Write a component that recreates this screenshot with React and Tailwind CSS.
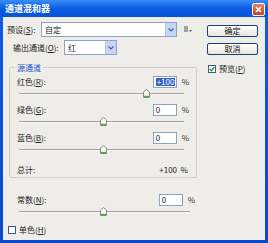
import React from "react";

const font = { fontFamily: '"Noto Sans CJK SC", "Liberation Sans", sans-serif' };

function Thumb() {
  return (
    <svg width="7" height="9" viewBox="0 0 7 9" className="block">
      <path d="M0.5 3 L3.5 0.5 L6.5 3 L6.5 8.5 L0.5 8.5 Z" fill="#fbfbf8" stroke="#8a8a80" strokeWidth="1" />
      <path d="M1 7.5 H6" stroke="#3cb23c" strokeWidth="1.4" />
    </svg>
  );
}

function Slider({ pos }) {
  return (
    <div className="relative h-[9px] flex items-center">
      <div className="w-full h-[2px] border-t border-[#a5a39a] bg-[#f7f7f4]" />
      <div className="absolute top-0" style={{ left: pos }}>
        <Thumb />
      </div>
    </div>
  );
}

function NumInput({ value, selected }) {
  return (
    <div className="w-[24px] h-[12px] bg-white border border-[#8aa3c4] flex items-center pl-[2px] text-[8px] leading-none text-[#222]">
      {selected ? (
        <span className="bg-[#3162c4] text-white px-[1px]">{value}</span>
      ) : (
        <span>{value}</span>
      )}
    </div>
  );
}

function Channel({ label, mnemonic, suffix, value, selected, pos }) {
  return (
    <div className="flex flex-col">
      <div className="flex items-center justify-between h-[12px]">
        <span className="text-[8px] leading-none text-[#222]">
          {label}(<span className="underline">{mnemonic}</span>){suffix}
        </span>
        <div className="flex items-center gap-[5px] mr-[1px]">
          <NumInput value={value} selected={selected} />
          <span className="text-[8px] leading-none text-[#333]">%</span>
        </div>
      </div>
      <div className="mt-[1px] ml-[2px] mr-[6px]">
        <Slider pos={pos} />
      </div>
    </div>
  );
}

function XPButton({ children }) {
  return (
    <div className="w-[51px] h-[12px] rounded-[2px] border border-[#1c3f7a] bg-gradient-to-b from-white to-[#e6e5de] flex items-center justify-center text-[8px] leading-none text-[#111]">
      {children}
    </div>
  );
}

function Arrow() {
  return (
    <div className="w-[11px] h-full bg-[#c4d5f7] border-l border-[#b0c6ee] flex items-center justify-center">
      <svg width="6" height="4" viewBox="0 0 6 4">
        <path d="M0.5 0.5 L3 3 L5.5 0.5" fill="none" stroke="#4d6185" strokeWidth="1.2" />
      </svg>
    </div>
  );
}

export default function App() {
  return (
    <div className="w-[268px] h-[243px] bg-gradient-to-b from-[#0b5ee8] to-[#0a47cc] flex flex-col overflow-hidden" style={font}>
      {/* Title bar */}
      <div className="h-[17px] flex items-center justify-between pl-[5px] pr-[3px] bg-gradient-to-b from-[#3a8cf5] via-[#0a5be4] to-[#0753d6]">
        <span className="text-[9px] font-bold text-white leading-none">通道混和器</span>
        <div className="w-[13px] h-[13px] rounded-[2px] border border-white bg-gradient-to-b from-[#e9815f] to-[#c4411e] flex items-center justify-center mt-[1px]">
          <svg width="7" height="7" viewBox="0 0 7 7">
            <path d="M1 1 L6 6 M6 1 L1 6" stroke="white" strokeWidth="1.6" />
          </svg>
        </div>
      </div>
      {/* Body */}
      <div className="flex-1 mx-[3px] mb-[3px] bg-[#eeede9] flex text-[#222]">
        {/* Left column */}
        <div className="w-[194px] flex flex-col">
          <div className="flex items-center mt-[5px] h-[15px]">
            <span className="ml-[4px] w-[34px] text-[8px] leading-none">
              预设(<span className="underline">S</span>):
            </span>
            <div className="w-[136px] h-[15px] bg-white border border-[#8aa3c4] flex items-center">
              <span className="flex-1 pl-[3px] text-[8px] leading-none">自定</span>
              <Arrow />
            </div>
            <svg width="8" height="7" viewBox="0 0 8 7" className="ml-[7px]">
              <path d="M0 1 H4 M0 3 H4 M0 5 H4" stroke="#555" strokeWidth="1" />
              <path d="M5 4 L8 4 L6.5 6 Z" fill="#555" />
            </svg>
          </div>
          <div className="flex items-center mt-[3px] h-[15px]">
            <span className="ml-[10px] w-[51px] text-[8px] leading-none">
              输出通道(<span className="underline">O</span>):
            </span>
            <div className="w-[53px] h-[15px] bg-white border border-[#8aa3c4] flex items-center">
              <span className="flex-1 pl-[3px] text-[8px] leading-none">红</span>
              <Arrow />
            </div>
          </div>
          {/* Group box */}
          <div className="relative ml-[6px] mt-[12px] h-[111px] border border-[#cfcdc4] rounded-[2px] pl-[7px] pr-[6px] pt-[8px] flex flex-col">
            <span className="absolute -top-[6px] left-[5px] px-[2px] bg-[#eeede9] text-[8px] leading-[11px] text-[#1c4fc8]">源通道</span>
            <Channel label="红色" mnemonic="R" suffix=":" value="+100" selected pos="124px" />
            <div className="mt-[6px]">
              <Channel label="绿色" mnemonic="G" suffix=":" value="0" pos="81px" />
            </div>
            <div className="mt-[6px]">
              <Channel label="蓝色" mnemonic="B" suffix=":" value="0" pos="81px" />
            </div>
            <div className="flex items-center justify-between mt-[11px] h-[10px] mr-[2px]">
              <span className="text-[8px] leading-none">总计:</span>
              <span className="text-[8px] leading-none">+100&nbsp;&nbsp;%</span>
            </div>
          </div>
          {/* Constant */}
          <div className="ml-[14px] mt-[16px] mr-[1px]">
            <Channel label="常数" mnemonic="N" suffix=":" value="0" pos="81px" />
          </div>
          <div className="flex items-center mt-[10px] ml-[5px]">
            <div className="w-[8px] h-[8px] border border-[#3a5d8f] bg-white" />
            <span className="ml-[3px] text-[8px] leading-none">
              单色(<span className="underline">H</span>)
            </span>
          </div>
        </div>
        {/* Right column */}
        <div className="flex flex-col ml-[10px] mt-[8px]">
          <XPButton>确定</XPButton>
          <div className="mt-[6px]">
            <XPButton>取消</XPButton>
          </div>
          <div className="flex items-center mt-[10px] ml-[1px]">
            <div className="w-[8px] h-[8px] border border-[#3a5d8f] bg-white flex items-center justify-center">
              <svg width="6" height="6" viewBox="0 0 6 6">
                <path d="M0.8 3 L2.4 4.6 L5.3 1" fill="none" stroke="#21a121" strokeWidth="1.5" />
              </svg>
            </div>
            <span className="ml-[3px] text-[8px] leading-none">
              预览(<span className="underline">P</span>)
            </span>
          </div>
        </div>
      </div>
    </div>
  );
}
